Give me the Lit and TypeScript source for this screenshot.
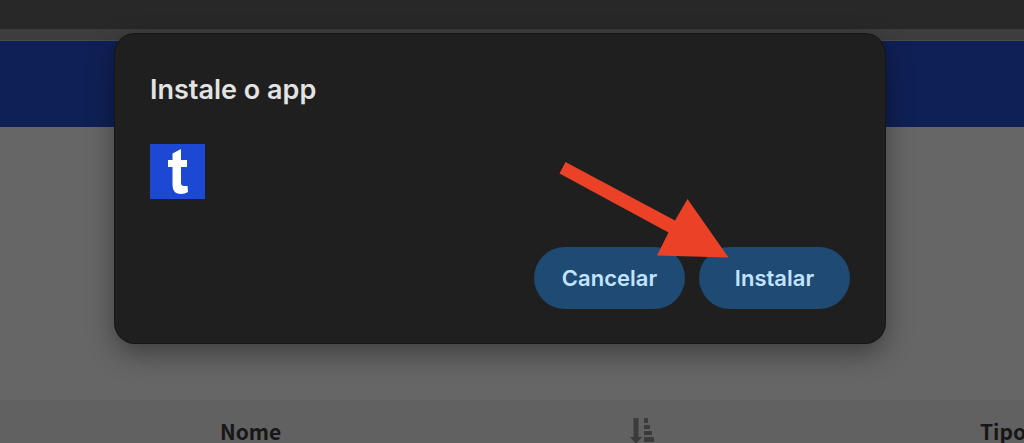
import { LitElement, html, css } from "lit";
import { customElement } from "lit/decorators.js";

@customElement("install-dialog")
class InstallDialog extends LitElement {
  static styles = css`
    :host {
      display: block;
      font-family: Inter, "Liberation Sans", sans-serif;
    }
    .dialog {
      position: relative;
      display: flex;
      flex-direction: column;
      width: auto;
      margin: 0;
      padding: 36px 35px 34px;
      border: 0;
      border-radius: 20px;
      background: #1f1f1f;
      color: #e3e3e3;
      box-shadow: 0 0 0 1px #161616, 0 10px 28px rgba(0, 0, 0, 0.4);
    }
    .title {
      margin: 0;
      font-size: 27px;
      line-height: 40px;
      font-weight: 600;
    }
    .logo {
      display: block;
      width: 55px;
      height: 55px;
      margin-top: 34px;
    }
    .actions {
      display: flex;
      justify-content: flex-end;
      gap: 14px;
      margin-top: 48px;
    }
    .action {
      min-width: 151px;
      height: 62px;
      padding: 0 24px;
      border: 0;
      border-radius: 31px;
      background: #1e4a73;
      color: #c2e4ff;
      font: 600 22px/32px Inter, "Liberation Sans", sans-serif;
    }
    .arrow {
      position: absolute;
      right: 156px;
      top: 127px;
      width: 170px;
      height: 97px;
      pointer-events: none;
    }
  `;

  render() {
    return html`
      <dialog class="dialog" open aria-labelledby="title">
        <h1 class="title" id="title">Instale o app</h1>
        <svg class="logo" viewBox="0 0 55 55" aria-hidden="true">
          <rect width="55" height="55" fill="#1c48d4" />
          <path
            fill="#fff"
            d="M31 5V16H37V23H31V39Q31 42 34 42H37.500L38 48Q35 50 31 50Q22.500 50 22.500 41V23H18V16H22.500V9.500Z"
          />
        </svg>
        <div class="actions">
          <button class="action" type="button">Cancelar</button>
          <button class="action" type="button">Instalar</button>
        </div>
        <svg class="arrow" viewBox="0 0 170 97" aria-hidden="true">
          <path fill="#eb4127" d="M6.500 1L116 59.500L128.500 38L169.500 96.500L98 94.500L109.500 71.500L.5 12.500Z" />
        </svg>
      </dialog>
    `;
  }
}

@customElement("app-root")
class AppRoot extends LitElement {
  static styles = css`
    :host {
      display: block;
      position: relative;
      height: 100vh;
      overflow: hidden;
      background: #666;
      font-family: "Noto Sans CJK SC", "Noto Sans", sans-serif;
    }
    .tabs {
      height: 29px;
      background: #282828;
    }
    .toolbar {
      height: 11px;
      border-bottom: 1px solid #4b4b4b;
      background: #3d3d3d;
    }
    .brand {
      height: 86px;
      background: #0f2056;
    }
    .content {
      padding-top: 273px;
    }
    .list {
      width: 120%;
      table-layout: fixed;
      border-collapse: collapse;
      background: #616161;
      color: #171717;
    }
    .list th {
      padding: 17px 0;
      font-size: 21px;
      line-height: 28px;
      font-weight: 700;
      text-align: left;
    }
    .col-pick {
      width: 220px;
    }
    .col-name {
      width: 760px;
    }
    .sortable {
      display: flex;
      justify-content: space-between;
      width: 435px;
    }
    .sort {
      display: flex;
      padding: 0;
      border: 0;
      background: none;
      color: #3b3b3b;
    }
    .overlay {
      position: absolute;
      top: 34px;
      left: 115px;
      width: calc(100% - 254px);
    }
  `;

  render() {
    return html`
      <div class="tabs"></div>
      <div class="toolbar"></div>
      <header class="brand"></header>
      <main class="content">
        <table class="list">
          <thead>
            <tr>
              <th class="col-pick"></th>
              <th class="col-name" scope="col">
                <div class="sortable">
                  Nome
                  <button class="sort" type="button" aria-label="Ordenar por nome">
                    <svg width="25" height="28" viewBox="0 0 25 28" fill="currentColor" aria-hidden="true">
                      <path d="M3.500 1H8.500V20H12L6 27L0 20H3.500Z" />
                      <path d="M14 1H18V6H14ZM14 8H20V12H14ZM14 14H22V18H14ZM14 20H24V25H14Z" />
                    </svg>
                  </button>
                </div>
              </th>
              <th scope="col">Tipo</th>
            </tr>
          </thead>
        </table>
      </main>
      <install-dialog class="overlay"></install-dialog>
    `;
  }
}
